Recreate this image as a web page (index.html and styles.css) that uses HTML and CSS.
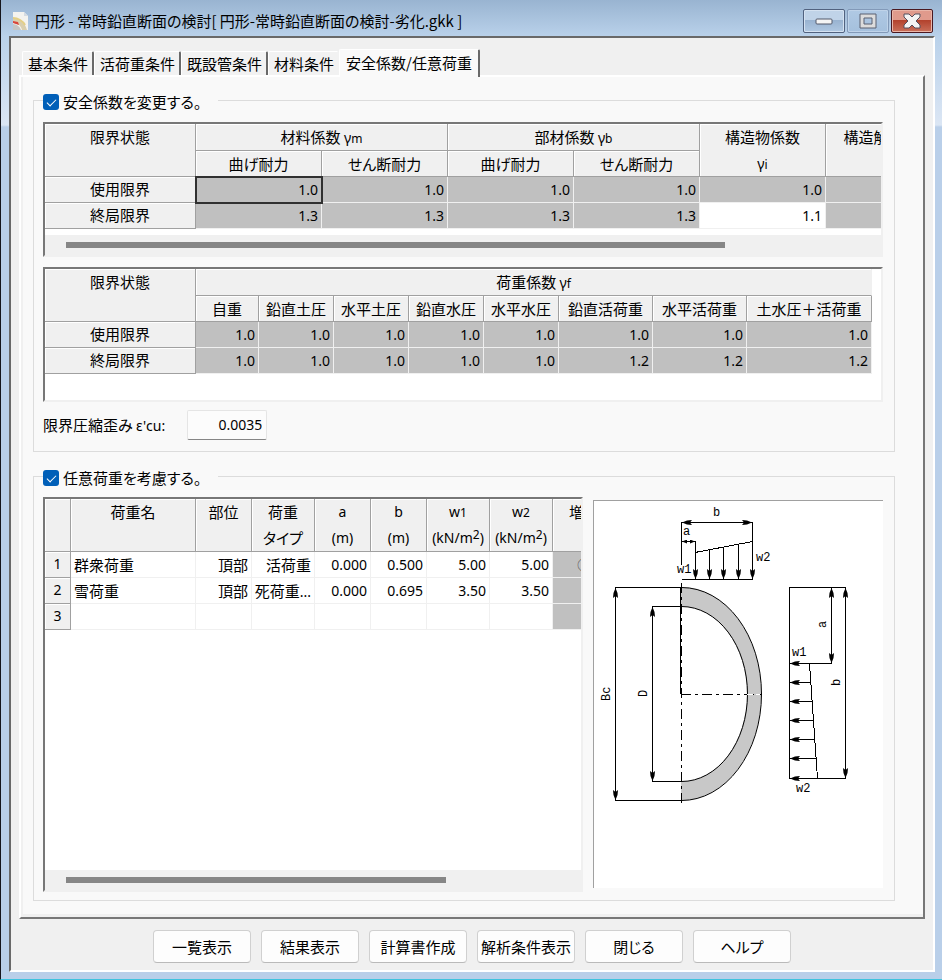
FILE: index.html
```html
<!DOCTYPE html>
<html lang="ja">
<head>
<meta charset="utf-8">
<meta name="viewport" content="width=device-width, initial-scale=1">
<title>円形 - 常時鉛直断面の検討</title>
<link rel="stylesheet" href="styles.css">
</head>
<body>
<div class="window">
  <header class="titlebar">
    <svg class="app-icon" width="16" height="18" viewBox="0 0 16 18" aria-hidden="true">
      <path d="M0 0h11l4 4v14H0z" fill="#f4f3ef"/>
      <path d="M11 0v4h4z" fill="#d5dbe2"/>
      <path d="M0 6c6 0 12 4 14 12H9C8 14 5 11 0 11z" fill="#d9cfae"/>
      <path d="M0 6c5 0 10 3 12 7" fill="none" stroke="#e3cf86" stroke-width="2"/>
      <path d="M0 9l5 1 1 3-6-2z" fill="#d8453a"/>
      <path d="M0 12c4 0 7 3 8 6H0z" fill="#c4c6c4"/>
    </svg>
    <h1 class="title">円形 - 常時鉛直断面の検討[ 円形-常時鉛直断面の検討-劣化.gkk ]</h1>
    <div class="caption-buttons">
      <button class="caption" type="button" aria-label="最小化"><svg width="18" height="8" viewBox="0 0 18 8"><rect x="1" y="2" width="16" height="5" rx="1" fill="#f4f4f4" stroke="#53586a"/></svg></button>
      <button class="caption caption-dim" type="button" aria-label="最大化"><svg width="18" height="16" viewBox="0 0 18 16"><path d="M1 1h16v14H1zM5 5v6h8V5z" fill="#dcdcdc" fill-rule="evenodd" stroke="#5b6070"/></svg></button>
      <button class="caption caption-close" type="button" aria-label="閉じる"><svg width="18" height="16" viewBox="0 0 18 16"><path d="M1 1h5l3 3 3-3h5v3l-4 4 4 4v3h-5l-3-3-3 3H1v-3l4-4-4-4z" fill="#f4f4f4" stroke="#54505e"/></svg></button>
    </div>
  </header>

  <main class="client">
    <nav class="tabs" role="tablist">
      <button class="tab" type="button" role="tab">基本条件</button>
      <button class="tab" type="button" role="tab">活荷重条件</button>
      <button class="tab" type="button" role="tab">既設管条件</button>
      <button class="tab" type="button" role="tab">材料条件</button>
      <button class="tab tab-active" type="button" role="tab" aria-selected="true">安全係数/任意荷重</button>
    </nav>

    <section class="page">
      <fieldset class="group">
        <legend><input type="checkbox" id="change-safety" checked><label for="change-safety">安全係数を変更する。</label></legend>
        <div class="grid grid-factors">
          <table class="sheet sheet-material">
            <colgroup><col class="c-state"><col class="c-factor" span="6"></colgroup>
            <thead>
              <tr class="head-first">
                <th rowspan="2">限界状態</th>
                <th colspan="2">材料係数 <span class="latin">γ<small>m</small></span></th>
                <th colspan="2">部材係数 <span class="latin">γ<small>b</small></span></th>
                <th rowspan="2" class="two-line">構造物係数<br><span class="latin">γ<small>i</small></span></th>
                <th rowspan="2">構造解析係数</th>
              </tr>
              <tr><th>曲げ耐力</th><th>せん断耐力</th><th>曲げ耐力</th><th>せん断耐力</th></tr>
            </thead>
            <tbody class="locked">
              <tr><th>使用限界</th><td class="selected">1.0</td><td>1.0</td><td>1.0</td><td>1.0</td><td>1.0</td><td></td></tr>
              <tr><th>終局限界</th><td>1.3</td><td>1.3</td><td>1.3</td><td>1.3</td><td class="open">1.1</td><td></td></tr>
            </tbody>
          </table>
          <div class="scrollbar"><div class="thumb thumb-wide"></div></div>
        </div>

        <div class="grid grid-factors">
          <table class="sheet sheet-load">
            <colgroup><col class="c-state"><col class="c-63"><col class="c-75" span="4"><col class="c-94" span="2"><col class="c-125"></colgroup>
            <thead>
              <tr class="head-first">
                <th rowspan="2">限界状態</th>
                <th colspan="8" class="open-right">荷重係数 <span class="latin">γ<small>f</small></span></th>
              </tr>
              <tr><th>自重</th><th>鉛直土圧</th><th>水平土圧</th><th>鉛直水圧</th><th>水平水圧</th><th>鉛直活荷重</th><th>水平活荷重</th><th>土水圧＋活荷重</th></tr>
            </thead>
            <tbody class="locked">
              <tr><th>使用限界</th><td>1.0</td><td>1.0</td><td>1.0</td><td>1.0</td><td>1.0</td><td>1.0</td><td>1.0</td><td>1.0</td></tr>
              <tr><th>終局限界</th><td>1.0</td><td>1.0</td><td>1.0</td><td>1.0</td><td>1.0</td><td>1.2</td><td>1.2</td><td>1.2</td></tr>
            </tbody>
          </table>
        </div>

        <div class="field">
          <label for="strain">限界圧縮歪み <span class="latin">ε'cu:</span></label>
          <input type="text" id="strain" value="0.0035">
        </div>
      </fieldset>

      <fieldset class="group group-loads">
        <legend><input type="checkbox" id="use-loads" checked><label for="use-loads">任意荷重を考慮する。</label></legend>
        <div class="split">
          <div class="grid grid-loads">
            <table class="sheet sheet-custom">
              <colgroup><col class="c-26"><col class="c-125"><col class="c-56"><col class="c-63"><col class="c-56" span="2"><col class="c-63" span="3"></colgroup>
              <thead>
                <tr>
                  <th></th><th>荷重名</th><th>部位</th><th class="two-line">荷重<br>タイプ</th>
                  <th class="unit two-line">a<br>(m)</th><th class="unit two-line">b<br>(m)</th>
                  <th class="unit two-line">w<small>1</small><br>(kN/m<small class="sup">2</small>)</th>
                  <th class="unit two-line">w<small>2</small><br>(kN/m<small class="sup">2</small>)</th>
                  <th>増分</th>
                </tr>
              </thead>
              <tbody>
                <tr><th class="unit">1</th><td class="name">群衆荷重</td><td class="kanji">頂部</td><td class="kanji">活荷重</td><td>0.000</td><td>0.500</td><td>5.00</td><td>5.00</td><td class="shut">○</td></tr>
                <tr><th class="unit">2</th><td class="name">雪荷重</td><td class="kanji">頂部</td><td class="kanji">死荷重<span class="latin">...</span></td><td>0.000</td><td>0.695</td><td>3.50</td><td>3.50</td><td class="shut"></td></tr>
                <tr><th class="unit">3</th><td></td><td></td><td></td><td></td><td></td><td></td><td></td><td class="shut"></td></tr>
              </tbody>
            </table>
            <div class="scrollbar"><div class="thumb thumb-short"></div></div>
          </div>

          <div class="figure">
            <svg class="diagram" viewBox="594 501 289 386" role="img" aria-label="荷重位置の説明図">
              <defs>
                <marker id="arrow" markerUnits="userSpaceOnUse" markerWidth="10" markerHeight="6" refX="10" refY="3" orient="auto-start-reverse" viewBox="0 0 10 6"><path d="M10 3L5 1 0 .5l2 2.500-2 2.500 5-.5z"/></marker>
                <marker id="arrow-small" markerUnits="userSpaceOnUse" markerWidth="5" markerHeight="4" refX="5" refY="2" orient="auto-start-reverse" viewBox="0 0 5 4"><path d="M5 2L0 0v4z"/></marker>
              </defs>
              <path d="M681 587A80 106.500 0 0 1 681 800.500V781.500A66 87.500 0 0 0 681 606.500z" fill="#c8c8c8"/>
              <g class="line">
                <path d="M681.500 587.500A80 106.500 0 0 1 681.500 800.500M681.500 606.500A66 87.500 0 0 1 681.500 781.500"/>
              </g>
              <g class="line crisp">
                <path d="M680.500 587V694M681.500 522V565M681.500 579.500H753M695.500 541V553M752.500 522V541"/>
                <path d="M615 587.500H682M652 606.500H682M652 781.500H682M615 800.500H682"/>
                <path d="M789.500 587V779M789 587.500H846M789 778.500H846M809 663.500H832"/>
                <path d="M681.500 583V805M681 694.500H762" stroke-dasharray="10 4 3 4"/>
                <path d="M747 694.500H753M756 694.500H760" stroke="#fff"/>
                <path d="M695 552.500L752.500 541.500M809.500 663.500L817.500 778.500"/>
              </g>
              <g class="line crisp">
                <path d="M682 522.500H752" marker-start="url(#arrow)" marker-end="url(#arrow)"/>
                <path d="M682 541.500H695" marker-start="url(#arrow-small)" marker-end="url(#arrow-small)"/>
                <path d="M615.500 588V800" marker-start="url(#arrow)" marker-end="url(#arrow)"/>
                <path d="M652.500 607V781" marker-start="url(#arrow)" marker-end="url(#arrow)"/>
                <path d="M831.500 588V663" marker-start="url(#arrow)" marker-end="url(#arrow)"/>
                <path d="M845.500 588V778" marker-start="url(#arrow)" marker-end="url(#arrow)"/>
                <path d="M695.500 552V579" marker-end="url(#arrow)"/>
                <path d="M709.500 550V579" marker-end="url(#arrow)"/>
                <path d="M723.500 547V579" marker-end="url(#arrow)"/>
                <path d="M738.500 544V579" marker-end="url(#arrow)"/>
                <path d="M752.500 541V579" marker-end="url(#arrow)"/>
                <path d="M810 663.500H790" marker-end="url(#arrow)"/>
                <path d="M811 682.500H790" marker-end="url(#arrow)"/>
                <path d="M812 701.500H790" marker-end="url(#arrow)"/>
                <path d="M814 720.500H790" marker-end="url(#arrow)"/>
                <path d="M815 739.500H790" marker-end="url(#arrow)"/>
                <path d="M816 758.500H790" marker-end="url(#arrow)"/>
                <path d="M818 778.500H790" marker-end="url(#arrow)"/>
              </g>
              <g class="labels">
                <text x="713" y="516">b</text>
                <text x="683" y="535">a</text>
                <text x="756" y="561">w2</text>
                <text x="677" y="573">w1</text>
                <text x="792" y="656">w1</text>
                <text x="796" y="792">w2</text>
                <text transform="translate(826 628) rotate(-90)">a</text>
                <text transform="translate(840 686) rotate(-90)">b</text>
                <text transform="translate(610 701) rotate(-90)">Bc</text>
                <text transform="translate(647 697) rotate(-90)">D</text>
              </g>
            </svg>
          </div>
        </div>
      </fieldset>
    </section>

    <footer class="actions">
      <button type="button">一覧表示</button>
      <button type="button">結果表示</button>
      <button type="button">計算書作成</button>
      <button type="button">解析条件表示</button>
      <button type="button">閉じる</button>
      <button type="button">ヘルプ</button>
    </footer>
  </main>
</div>
</body>
</html>
```
FILE: styles.css
```css
* { box-sizing: border-box; }

body {
  margin: 0;
  color: #000;
  font: 15px/26px "Noto Sans CJK JP", "Noto Sans", sans-serif;
  font-feature-settings: "palt";
}

button, input { font: inherit; font-feature-settings: inherit; color: inherit; }

.latin, .unit, td { font-family: "Noto Sans", "Noto Sans CJK JP", sans-serif; font-size: 14px; }
.latin { line-height: 1; }
small { font-size: 12px; line-height: 1; }
.sup { position: relative; top: -4px; }

.window {
  display: flex;
  flex-direction: column;
  min-height: 100vh;
  padding: 0 7px 7px 8px;
  border-left: 1px solid #15151c;
  border-bottom: 1px solid #3fc3de;
  background: linear-gradient(#99b4d1 0, #b9d1ea 36px, #dbe6f4 125px, #b9cfe9 127px);
}

.titlebar { display: flex; align-items: center; height: 36px; padding: 6px 2px 0 4px; }
.title { flex: 1; margin: 0 0 0 6px; font-size: 15px; font-weight: 400; white-space: nowrap; }
.caption-buttons { display: flex; gap: 2px; }
.caption {
  display: flex;
  align-items: center;
  justify-content: center;
  width: 42px;
  height: 24px;
  padding: 0;
  border: 1px solid #51627f;
  border-radius: 2px;
  background: linear-gradient(#c0d3e8 45%, #98b2d0 45%, #b0c8e2);
  box-shadow: inset 0 0 0 1px #d5e2f1;
}
.caption-dim { border-color: #8299b8; background: linear-gradient(#b0c9e4, #a5c0dd); box-shadow: inset 0 0 0 1px #bfd3e9; }
.caption-close { border-color: #4a1820; background: linear-gradient(#e09a8c 45%, #b2402b 45%, #c9705b); box-shadow: inset 0 0 0 1px #eab6a9; }

.client {
  display: flex;
  flex: 1;
  flex-direction: column;
  padding: 11px 8px 0;
  border: 2px solid;
  border-color: #696969 #fff #fff #696969;
  background: #f0f0f0;
}

.tabs { display: flex; align-items: flex-end; height: 26px; padding-left: 3px; }
.tab {
  height: 24px;
  padding: 0 4px 0 5px;
  border: 1px solid #fff;
  border-right: 2px solid #696969;
  border-bottom: 0;
  border-radius: 2px 2px 0 0;
  background: #f2f2f2;
  line-height: 20px;
  white-space: nowrap;
}
.tab:nth-child(4) { padding-right: 3px; border-right-color: #f2f2f2; }
.tab-active { z-index: 1; height: 28px; margin-bottom: -2px; padding: 0 6px 2px; background: #f9f9f9; }

.page {
  flex: 1;
  padding: 13px 28px 14px 12px;
  border: 2px solid;
  border-color: #fff #777 #777 #fff;
  background: #f9f9f9;
  box-shadow: inset 1px -2px 0 1px #f0f0f0;
}

.group { min-width: 0; margin: 0; padding: 12px 11px 11px 9px; border: 1px solid #dcdcdc; }
.group legend { display: flex; align-items: center; gap: 4px; width: 175px; height: 20px; padding: 3px 0 0; line-height: 17px; white-space: nowrap; }
.group input[type="checkbox"] {
  appearance: none;
  width: 16px;
  height: 16px;
  margin: 0;
  border-radius: 3px;
  background: #005fb8;
}
.group input[type="checkbox"]::before {
  content: "";
  display: block;
  width: 8px;
  height: 4px;
  margin: 5px 4px;
  border: solid #fff;
  border-width: 0 0 1px 1px;
  transform: rotate(-45deg);
}
.group-loads { margin-top: 14px; padding-top: 11px; padding-bottom: 8px; }

.grid {
  display: flex;
  flex-direction: column;
  min-width: 0;
  overflow: hidden;
  border: 2px solid;
  border-color: #777 #f0f0f0 #f0f0f0 #777;
  background: #fff;
}
.grid-factors { min-height: 135px; }
.grid-factors + .grid-factors { margin-top: 10px; }

.scrollbar { height: 20px; margin-top: auto; padding: 7px 21px; background: #f0f0f0; }
.thumb { height: 6px; background: #868686; }
.thumb-wide { width: 83%; }
.thumb-short { width: 77%; }

.sheet { flex: none; table-layout: fixed; border-collapse: separate; border-spacing: 0; }
.sheet-material { width: 907px; margin-bottom: 6px; }
.sheet-load { width: 827px; }
.sheet-custom { width: 571px; }
.c-state { width: 151px; }
.c-factor { width: 126px; }
.c-26 { width: 26px; }
.c-56 { width: 56px; }
.c-63 { width: 63px; }
.c-75 { width: 75px; }
.c-94 { width: 94px; }
.c-125 { width: 125px; }

.sheet th, .sheet td { height: 26px; padding: 0; line-height: 24px; white-space: nowrap; }
.sheet .head-first th { height: 27px; }
.sheet th {
  border: solid #a0a0a0;
  border-width: 0 1px 1px 0;
  background: #f0f0f0;
  box-shadow: inset 1px 1px 0 #fff;
  font-weight: 400;
  text-align: center;
  vertical-align: top;
}
.sheet thead th { line-height: 25px; }
.sheet thead .two-line { line-height: 26px; }
.sheet .open-right { border-right-color: #f0f0f0; }
.sheet td { padding: 1px 3px 0 0; border: solid #f0f0f0; border-width: 0 1px 1px 0; line-height: 24px; text-align: right; }
.locked td, .sheet .shut { background: #c0c0c0; }
.locked .open { background: #fff; }
.sheet .selected { position: relative; outline: 2px solid #303030; outline-offset: -1px; }
.sheet .kanji { font-size: 15px; }
.sheet .name { padding-left: 3px; font-size: 15px; text-align: left; }
.sheet .shut { padding: 0; text-align: center; color: #555; }

.field { display: flex; align-items: center; gap: 22px; margin-top: 8px; }
.field input {
  width: 80px;
  height: 30px;
  padding: 0 4px 2px;
  border: 1px solid #e5e5e5;
  border-bottom-color: #868686;
  border-radius: 2px;
  background: #fcfcfc;
  font-family: "Noto Sans", sans-serif;
  font-size: 14px;
  text-align: right;
}

.split { display: flex; gap: 10px; }
.grid-loads { flex: 1; min-height: 395px; }
.figure { flex: none; width: 290px; margin: 3px 0 4px; border: solid #a0a0a0; border-width: 1px 0 0 1px; background: #fff; }
.diagram { display: block; width: 100%; }
.line { fill: none; stroke: #000; stroke-width: 1; }
.line path { vector-effect: none; }
.crisp { shape-rendering: crispEdges; }
.labels { font: 12px "Liberation Mono", monospace; }

.actions { display: flex; flex-wrap: wrap; justify-content: center; gap: 10px; padding: 11px 0 7px; }
.actions button {
  width: 98px;
  height: 33px;
  padding: 0;
  border: 1px solid #d0d0d0;
  border-bottom-color: #bababa;
  border-radius: 4px;
  background: #fdfdfd;
  line-height: 30px;
  white-space: nowrap;
}
```
